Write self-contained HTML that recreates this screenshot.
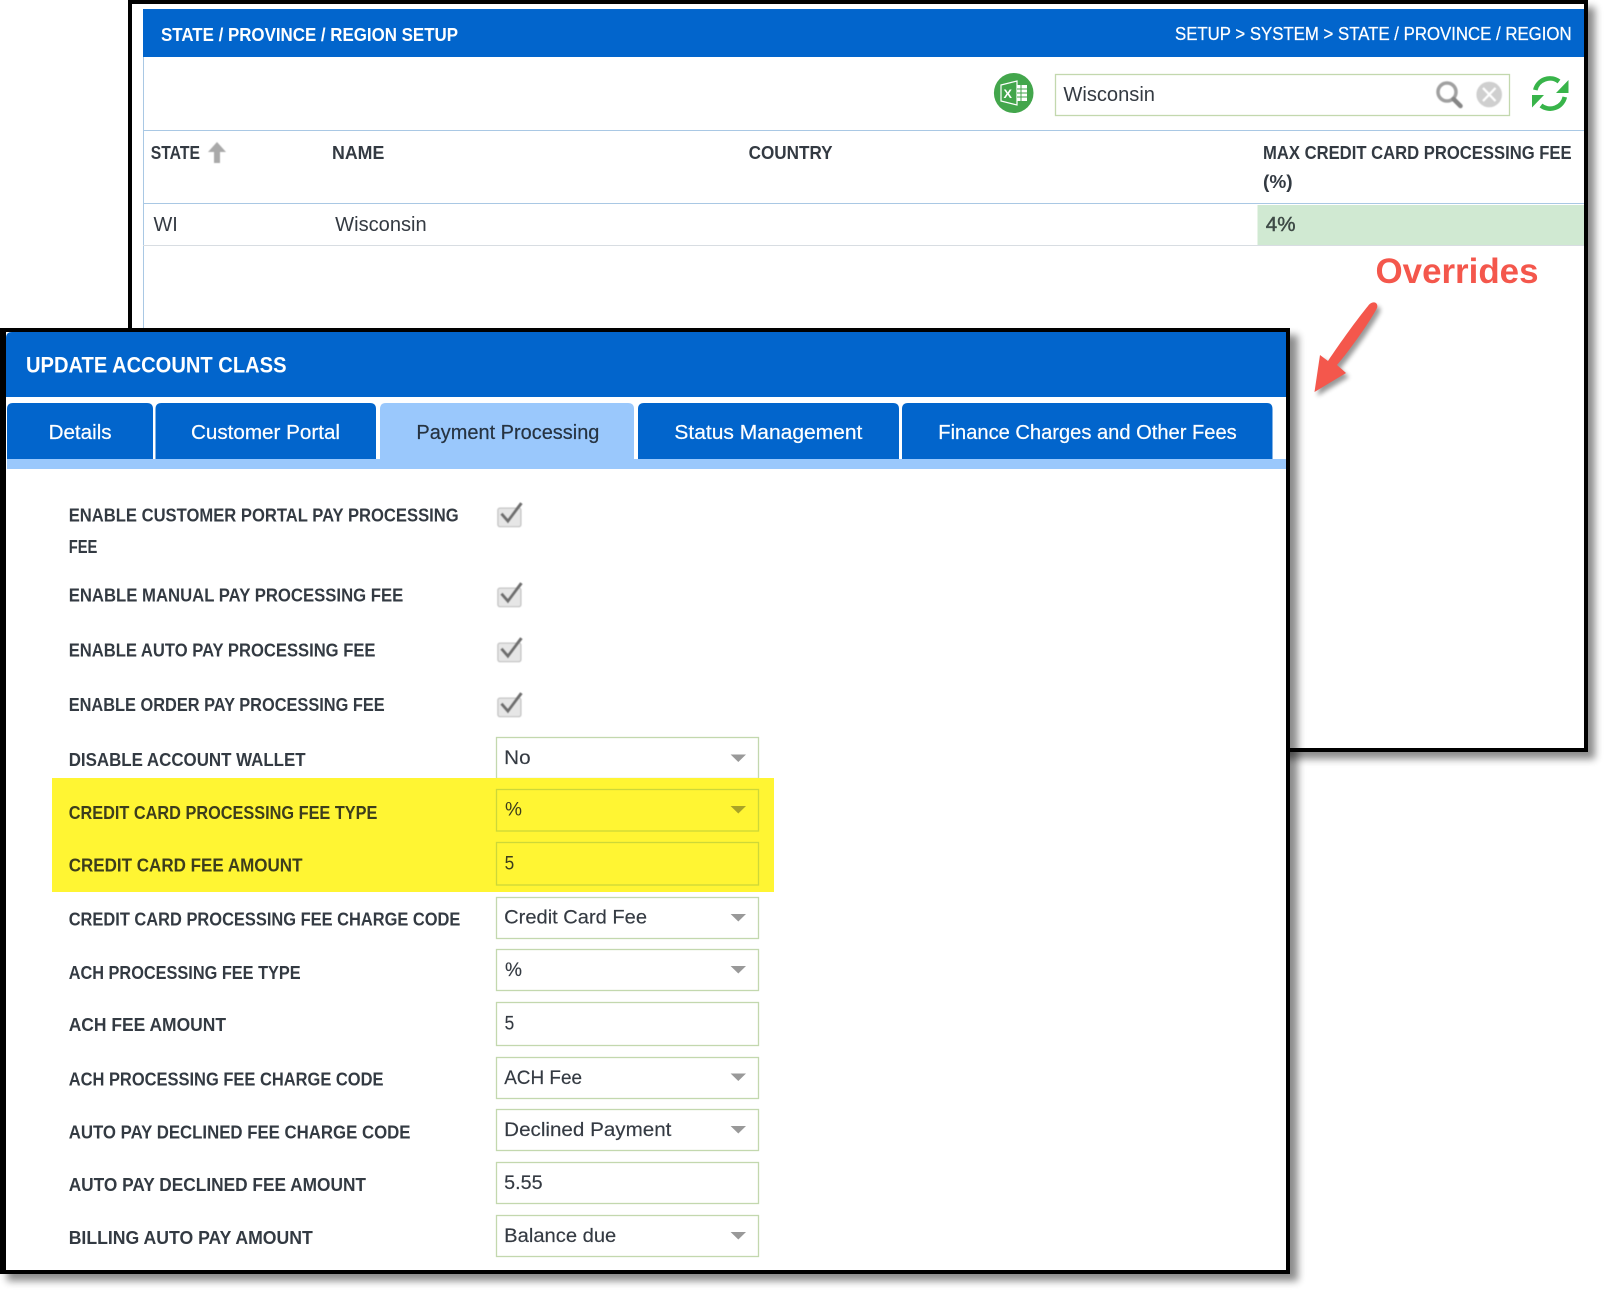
<!DOCTYPE html>
<html lang="en"><head><meta charset="utf-8"><title>Account Class Overrides</title>
<style>
html,body{margin:0;padding:0;background:#fff;width:1608px;height:1294px;overflow:hidden}
svg{display:block}
text{font-family:"Liberation Sans",sans-serif}
.l{font-size:18px;font-weight:700;fill:#333a42;transform:translateY(-0.7px)}
.ly{font-size:18px;font-weight:700;fill:#3c3d1c;transform:translateY(-0.7px)}
.v{font-size:19px;fill:#343a42;stroke:#343a42;stroke-width:.15}
.t{font-size:20px;fill:#fff;stroke:#fff;stroke-width:.2}
.h{font-size:18px;font-weight:700;fill:#333a42;transform:translateY(-0.5px)}
.b{fill:#fff;stroke:#c3d8ae;stroke-width:1.3}
.by{fill:none;stroke:#cdd838;stroke-width:1.3}
.c{fill:#999}
</style></head><body>
<svg xmlns="http://www.w3.org/2000/svg" width="1608" height="1294" viewBox="0 0 1608 1294">
<defs><filter id="s" x="-5%" y="-5%" width="110%" height="110%"><feGaussianBlur stdDeviation="4"/></filter>
<filter id="a" x="-30%" y="-30%" width="160%" height="160%"><feGaussianBlur stdDeviation="2.5"/></filter>
<filter id="soft" x="-10%" y="-10%" width="120%" height="120%"><feGaussianBlur stdDeviation="0.5"/></filter></defs>
<rect width="1608" height="1294" fill="#fff"/>

<!-- top window -->
<rect x="135" y="7" width="1460" height="752" fill="#000" opacity=".45" filter="url(#s)"/>
<rect x="130" y="2" width="1456" height="748" fill="#fff" stroke="#000" stroke-width="4"/>
<rect x="143" y="57" width="1" height="280" fill="#a9c8e4"/>
<rect x="143" y="9" width="1441" height="48" fill="#0265cc"/>
<text x="161" y="41" font-size="18.5" font-weight="700" fill="#fff" textLength="297" lengthAdjust="spacingAndGlyphs">STATE / PROVINCE / REGION SETUP</text>
<text x="1175" y="40" font-size="18.5" fill="#fff" stroke="#fff" stroke-width=".25" textLength="396.6" lengthAdjust="spacingAndGlyphs">SETUP &gt; SYSTEM &gt; STATE / PROVINCE / REGION</text>

<!-- excel icon -->
<ellipse cx="1013.7" cy="93" rx="19.8" ry="20" fill="#43a64c"/>
<path d="M1001 85 L1017 81 V105 L1001 101 Z" fill="none" stroke="#fff" stroke-width="1.2"/>
<text x="1003.5" y="98" font-size="12" font-weight="700" fill="#fff" textLength="8.5" lengthAdjust="spacingAndGlyphs">X</text>
<rect x="1017" y="85" width="10" height="16" fill="#fff"/>
<path d="M1017 89H1027M1017 93H1027M1017 97H1027M1021 85V101" stroke="#43a64c" stroke-width="1"/>

<!-- search -->
<rect x="1055.5" y="74.5" width="454" height="41" class="b"/>
<text x="1063.4" y="101" font-size="20.5" fill="#343a42" textLength="91.6" lengthAdjust="spacingAndGlyphs">Wisconsin</text>
<g filter="url(#soft)"><circle cx="1447" cy="92" r="9" fill="none" stroke="#a0a0a0" stroke-width="3.5"/>
<path d="M1453.5 99 L1460.5 106" stroke="#868686" stroke-width="4.5" stroke-linecap="round"/>
<circle cx="1489.2" cy="94.5" r="12.8" fill="#cfcfcf"/>
<path d="M1483 88 L1495.5 101 M1495.5 88 L1483 101" stroke="#fff" stroke-width="2.2"/></g>

<!-- refresh -->
<g fill="none" stroke="#38b44a" stroke-width="4.6">
<path d="M1535.3 90 A15 15 0 0 1 1559 81.5"/>
<path d="M1564.8 97 A15 15 0 0 1 1541 105.5"/></g>
<path d="M1568.5 80 V93 H1556 Z" fill="#38b44a"/>
<path d="M1532 95 H1544 L1532 107.5 Z" fill="#38b44a"/>

<rect x="143" y="130" width="1441" height="1" fill="#a9c8e4"/>
<rect x="143" y="203" width="1441" height="1" fill="#a9c8e4"/>
<text x="150.7" y="159.5" class="h" textLength="49.3" lengthAdjust="spacingAndGlyphs">STATE</text>
<path d="M217 142 L226 152 H220 V163 H214 V152 H208 Z" fill="#a9a9a9" filter="url(#soft)"/>
<text x="332" y="159.5" class="h" textLength="52.3" lengthAdjust="spacingAndGlyphs">NAME</text>
<text x="748.6" y="159.5" class="h" textLength="84" lengthAdjust="spacingAndGlyphs">COUNTRY</text>
<text x="1263" y="159.5" class="h" textLength="308.6" lengthAdjust="spacingAndGlyphs">MAX CREDIT CARD PROCESSING FEE</text>
<text x="1263" y="188.3" class="h" textLength="29.6" lengthAdjust="spacingAndGlyphs">(%)</text>
<rect x="1257.5" y="205" width="326.5" height="40" fill="#d0e9d2"/>
<rect x="143" y="245" width="1441" height="1" fill="#d8dde2"/>
<text x="153.5" y="231" font-size="20" fill="#343a42" textLength="24.3" lengthAdjust="spacingAndGlyphs">WI</text>
<text x="335.2" y="231" font-size="20" fill="#343a42" textLength="91.5" lengthAdjust="spacingAndGlyphs">Wisconsin</text>
<text x="1265.8" y="231" font-size="20" fill="#3e4a46" stroke="#3e4a46" stroke-width=".45" textLength="29.7" lengthAdjust="spacingAndGlyphs">4%</text>

<!-- overrides -->
<text x="1375.5" y="283" font-size="35" font-weight="700" fill="#f4574c" textLength="163" lengthAdjust="spacingAndGlyphs">Overrides</text>
<path d="M1377 308 C1371 320 1350 350 1337 365 L1346 373 L1314.5 392 L1320 355 L1328 361 C1340 343 1358 318 1368 306 C1372 300 1379 302 1377 308 Z" fill="#000" opacity=".4" filter="url(#a)" transform="translate(3,4)"/>
<path d="M1377 308 C1371 320 1350 350 1337 365 L1346 373 L1314.5 392 L1320 355 L1328 361 C1340 343 1358 318 1368 306 C1372 300 1379 302 1377 308 Z" fill="#f4574c"/>

<!-- bottom window -->
<rect x="7" y="335" width="1291" height="946" fill="#000" opacity=".45" filter="url(#s)"/>
<rect x="-2" y="328" width="1292" height="946" fill="#000"/>
<rect x="6" y="332" width="1280" height="938" fill="#fff"/>
<path d="M6 397 V338 Q6 332 12 332 H1286 V397 Z" fill="#0265cc"/>
<text x="26" y="372.7" font-size="22" font-weight="700" fill="#fff" textLength="260.5" lengthAdjust="spacingAndGlyphs">UPDATE ACCOUNT CLASS</text>

<!-- tabs -->
<rect x="7" y="459" width="1279" height="10" fill="#9ac8fc"/>
<path d="M7 459 V409 Q7 403 13 403 H147 Q153 403 153 409 V459 Z" fill="#0265cc"/>
<path d="M155.5 459 V409 Q155.5 403 161.5 403 H370 Q376 403 376 409 V459 Z" fill="#0265cc"/>
<path d="M380 459 V409 Q380 403 386 403 H628 Q634 403 634 409 V459 Z" fill="#9ac8fc"/>
<path d="M638 459 V409 Q638 403 644 403 H893 Q899 403 899 409 V459 Z" fill="#0265cc"/>
<path d="M902 459 V409 Q902 403 908 403 H1267 Q1272.5 403 1272.5 409 V459 Z" fill="#0265cc"/>
<text x="48.6" y="439" class="t" textLength="63" lengthAdjust="spacingAndGlyphs">Details</text>
<text x="191" y="439" class="t" textLength="149" lengthAdjust="spacingAndGlyphs">Customer Portal</text>
<text x="416.4" y="439" font-size="20" fill="#263341" stroke="#263341" stroke-width=".2" textLength="183" lengthAdjust="spacingAndGlyphs">Payment Processing</text>
<text x="674.4" y="439" class="t" textLength="188" lengthAdjust="spacingAndGlyphs">Status Management</text>
<text x="938.3" y="439" class="t" textLength="298.4" lengthAdjust="spacingAndGlyphs">Finance Charges and Other Fees</text>

<!-- labels -->
<text x="68.7" y="522" class="l" textLength="390" lengthAdjust="spacingAndGlyphs">ENABLE CUSTOMER PORTAL PAY PROCESSING</text>
<text x="68.7" y="553.5" class="l" textLength="28.7" lengthAdjust="spacingAndGlyphs">FEE</text>
<text x="68.7" y="602" class="l" textLength="334.6" lengthAdjust="spacingAndGlyphs">ENABLE MANUAL PAY PROCESSING FEE</text>
<text x="68.7" y="657" class="l" textLength="306.8" lengthAdjust="spacingAndGlyphs">ENABLE AUTO PAY PROCESSING FEE</text>
<text x="68.7" y="711.5" class="l" textLength="316" lengthAdjust="spacingAndGlyphs">ENABLE ORDER PAY PROCESSING FEE</text>
<text x="68.7" y="766.5" class="l" textLength="236.9" lengthAdjust="spacingAndGlyphs">DISABLE ACCOUNT WALLET</text>

<!-- checkboxes -->
<g filter="url(#soft)" transform="translate(-0.6,-0.4)"><rect x="498.5" y="508.5" width="23" height="18.5" rx="2" fill="#e6e6e6" stroke="#c4c4c4" stroke-width="1.3"/><path d="M502 514 L508.5 521.5 L522 503.5" fill="none" stroke="#6e6e6e" stroke-width="3"/></g>
<g filter="url(#soft)" transform="translate(-0.6,79.6)"><rect x="498.5" y="508.5" width="23" height="18.5" rx="2" fill="#e6e6e6" stroke="#c4c4c4" stroke-width="1.3"/><path d="M502 514 L508.5 521.5 L522 503.5" fill="none" stroke="#6e6e6e" stroke-width="3"/></g>
<g filter="url(#soft)" transform="translate(-0.6,134.6)"><rect x="498.5" y="508.5" width="23" height="18.5" rx="2" fill="#e6e6e6" stroke="#c4c4c4" stroke-width="1.3"/><path d="M502 514 L508.5 521.5 L522 503.5" fill="none" stroke="#6e6e6e" stroke-width="3"/></g>
<g filter="url(#soft)" transform="translate(-0.6,189.6)"><rect x="498.5" y="508.5" width="23" height="18.5" rx="2" fill="#e6e6e6" stroke="#c4c4c4" stroke-width="1.3"/><path d="M502 514 L508.5 521.5 L522 503.5" fill="none" stroke="#6e6e6e" stroke-width="3"/></g>

<!-- No -->
<rect x="496.5" y="737.5" width="262" height="41" class="b"/>
<text x="504.2" y="764" class="v" textLength="26.4" lengthAdjust="spacingAndGlyphs">No</text>
<path d="M730.6 754.5 H746 L738.3 762 Z" class="c"/>

<!-- highlight -->
<rect x="52" y="778" width="722" height="114" fill="#fff533"/>
<text x="68.7" y="819.5" class="ly" textLength="308.7" lengthAdjust="spacingAndGlyphs">CREDIT CARD PROCESSING FEE TYPE</text>
<rect x="496.5" y="789.5" width="262" height="41.5" class="by"/>
<text x="505" y="815.3" font-size="19" fill="#3c3d1c" textLength="17" lengthAdjust="spacingAndGlyphs">%</text>
<path d="M730.6 806 H746 L738.3 813.5 Z" fill="#a9a327"/>
<text x="68.7" y="872" class="ly" textLength="233.8" lengthAdjust="spacingAndGlyphs">CREDIT CARD FEE AMOUNT</text>
<rect x="496.5" y="842.5" width="262" height="42.5" class="by"/>
<text x="504.6" y="869.7" font-size="19" fill="#3c3d1c" textLength="9.6" lengthAdjust="spacingAndGlyphs">5</text>

<!-- remaining rows -->
<text x="68.7" y="926" class="l" textLength="391.7" lengthAdjust="spacingAndGlyphs">CREDIT CARD PROCESSING FEE CHARGE CODE</text>
<rect x="496.5" y="897.5" width="262" height="41" class="b"/>
<text x="504.2" y="923.7" class="v" textLength="142.8" lengthAdjust="spacingAndGlyphs">Credit Card Fee</text>
<path d="M730.6 914 H746 L738.3 921.5 Z" class="c"/>

<text x="68.7" y="979.5" class="l" textLength="232" lengthAdjust="spacingAndGlyphs">ACH PROCESSING FEE TYPE</text>
<rect x="496.5" y="949.5" width="262" height="41" class="b"/>
<text x="505" y="976" class="v" textLength="17" lengthAdjust="spacingAndGlyphs">%</text>
<path d="M730.6 966 H746 L738.3 973.5 Z" class="c"/>

<text x="68.7" y="1031.5" class="l" textLength="157.3" lengthAdjust="spacingAndGlyphs">ACH FEE AMOUNT</text>
<rect x="496.5" y="1002.5" width="262" height="43" class="b"/>
<text x="504.6" y="1029.7" class="v" textLength="9.6" lengthAdjust="spacingAndGlyphs">5</text>

<text x="68.7" y="1086" class="l" textLength="314.8" lengthAdjust="spacingAndGlyphs">ACH PROCESSING FEE CHARGE CODE</text>
<rect x="496.5" y="1057.5" width="262" height="41" class="b"/>
<text x="504.2" y="1083.8" class="v" textLength="77.8" lengthAdjust="spacingAndGlyphs">ACH Fee</text>
<path d="M730.6 1073.5 H746 L738.3 1081 Z" class="c"/>

<text x="68.7" y="1139" class="l" textLength="341.8" lengthAdjust="spacingAndGlyphs">AUTO PAY DECLINED FEE CHARGE CODE</text>
<rect x="496.5" y="1109.5" width="262" height="41" class="b"/>
<text x="504.2" y="1135.8" class="v" textLength="167.2" lengthAdjust="spacingAndGlyphs">Declined Payment</text>
<path d="M730.6 1126 H746 L738.3 1133.5 Z" class="c"/>

<text x="68.7" y="1191.6" class="l" textLength="297.3" lengthAdjust="spacingAndGlyphs">AUTO PAY DECLINED FEE AMOUNT</text>
<rect x="496.5" y="1162.5" width="262" height="41" class="b"/>
<text x="504.2" y="1188.8" class="v" textLength="38.4" lengthAdjust="spacingAndGlyphs">5.55</text>

<text x="68.7" y="1244.6" class="l" textLength="244.1" lengthAdjust="spacingAndGlyphs">BILLING AUTO PAY AMOUNT</text>
<rect x="496.5" y="1215.5" width="262" height="41" class="b"/>
<text x="504.2" y="1241.8" class="v" textLength="112.1" lengthAdjust="spacingAndGlyphs">Balance due</text>
<path d="M730.6 1232 H746 L738.3 1239.5 Z" class="c"/>
</svg>
</body></html>
